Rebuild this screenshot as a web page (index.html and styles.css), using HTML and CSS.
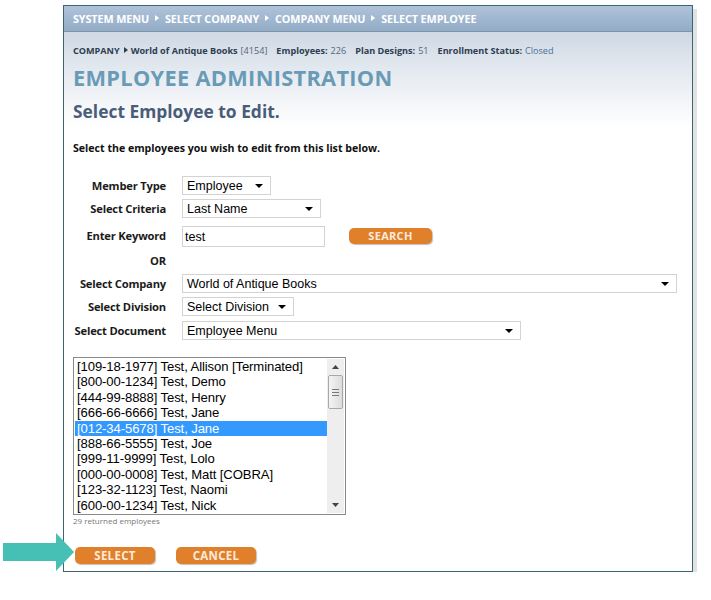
FILE: index.html
```html
<!DOCTYPE html>
<html>
<head>
<meta charset="utf-8">
<link rel="stylesheet" href="styles.css">
</head>
<body>
<div class="frame">
  <div class="topbar">
    <span>SYSTEM MENU</span><span class="tri"></span>
    <span>SELECT COMPANY</span><span class="tri"></span>
    <span>COMPANY MENU</span><span class="tri"></span>
    <span>SELECT EMPLOYEE</span>
  </div>
  <div class="head">
    <div class="info">
      <b>COMPANY</b><span class="tri dark"></span><b>World of Antique Books</b> <span class="muted">[4154]</span>
      <b class="gap">Employees:</b> <span class="muted">226</span>
      <b class="gap">Plan Designs:</b> <span class="muted">51</span>
      <b class="gap">Enrollment Status:</b> <span class="blue">Closed</span>
    </div>
    <h1>EMPLOYEE ADMINISTRATION</h1>
    <h2>Select Employee to Edit.</h2>
  </div>
  <div class="content">
    <p class="intro">Select the employees you wish to edit from this list below.</p>
    <div class="form">
      <div class="row r1"><label>Member Type</label><div class="sel w88"><span>Employee</span><svg width="8" height="4" viewBox="0 0 8 4"><path d="M0 0H8L4 4Z" fill="#000"/></svg></div></div>
      <div class="row r2"><label>Select Criteria</label><div class="sel w138"><span>Last Name</span><svg width="8" height="4" viewBox="0 0 8 4"><path d="M0 0H8L4 4Z" fill="#000"/></svg></div></div>
      <div class="row r3"><label>Enter Keyword</label><div class="inp">test</div><div class="btn search">SEARCH</div></div>
      <div class="row r4"><label>OR</label></div>
      <div class="row r5"><label>Select Company</label><div class="sel w494"><span>World of Antique Books</span><svg width="8" height="4" viewBox="0 0 8 4"><path d="M0 0H8L4 4Z" fill="#000"/></svg></div></div>
      <div class="row r6"><label>Select Division</label><div class="sel w111"><span>Select Division</span><svg width="8" height="4" viewBox="0 0 8 4"><path d="M0 0H8L4 4Z" fill="#000"/></svg></div></div>
      <div class="row r7"><label>Select Document</label><div class="sel w338"><span>Employee Menu</span><svg width="8" height="4" viewBox="0 0 8 4"><path d="M0 0H8L4 4Z" fill="#000"/></svg></div></div>
    </div>
    <div class="listbox">
      <div class="items">
        <div class="item">[109-18-1977] Test, Allison [Terminated]</div>
        <div class="item">[800-00-1234] Test, Demo</div>
        <div class="item">[444-99-8888] Test, Henry</div>
        <div class="item">[666-66-6666] Test, Jane</div>
        <div class="item on">[012-34-5678] Test, Jane</div>
        <div class="item">[888-66-5555] Test, Joe</div>
        <div class="item">[999-11-9999] Test, Lolo</div>
        <div class="item">[000-00-0008] Test, Matt [COBRA]</div>
        <div class="item">[123-32-1123] Test, Naomi</div>
        <div class="item">[600-00-1234] Test, Nick</div>
      </div>
      <div class="scroll">
        <svg class="arr" width="7" height="4" viewBox="0 0 7 4"><path d="M0 4H7L3.5 0Z" fill="#444"/></svg>
        <div class="thumb"><i></i><i></i><i></i></div>
        <div class="track"></div>
        <svg class="arr" width="7" height="4" viewBox="0 0 7 4"><path d="M0 0H7L3.5 4Z" fill="#444"/></svg>
      </div>
    </div>
    <div class="count">29 returned employees</div>
    <div class="actions">
      <div class="btn act">SELECT</div>
      <div class="btn act">CANCEL</div>
    </div>
  </div>
  <svg class="pointer" width="72" height="38" viewBox="0 0 72 38"><path d="M0 10H53V0L71 19L53 38V28H0Z" fill="#46bfb4"/></svg>
</div>
</body>
</html>
```

FILE: styles.css
```css
* { box-sizing: border-box; }
html, body { margin: 0; padding: 0; background: #fff; }
body { font-family: "Open Sans", "DejaVu Sans", sans-serif; color: #111; }

.frame {
  position: relative;
  margin: 5px 0 0 63px;
  width: 630px;
  height: 567px;
  border: 1.5px solid #3b6571;
  box-shadow: 4px 4px 0 #e2e2e2;
  background: #fff;
}

.topbar {
  height: 26px;
  background: linear-gradient(#afc3da, #93acc6);
  border-bottom: 1px solid #7f95ac;
  display: flex;
  align-items: center;
  padding-left: 9px;
  color: #fff;
  font-weight: 700;
  font-size: 10.8px;
  letter-spacing: -0.1px;
}
.tri {
  display: inline-block;
  width: 0; height: 0;
  border-left: 4px solid #fff;
  border-top: 3.5px solid transparent;
  border-bottom: 3.5px solid transparent;
  margin: 0 6px 2px 6px;
}
.tri.dark { border-left-color: #2e3d50; margin: 0 3px 1px 4px; }

.head {
  background: linear-gradient(#cfd9e4, #e6ebf1 45%, #ffffff 100%);
  padding: 10px 9px 0 9px;
  height: 95px;
}
.info {
  font-size: 9.1px;
  color: #2e3d50;
  white-space: nowrap;
  height: 16px;
  display: flex;
  align-items: center;
}
.info b { font-weight: 700; }
.info .gap { margin-left: 9px; }
.info .muted { color: #56657a; margin-left: 3px; }
.info .blue { color: #4a6d9b; margin-left: 3px; }

h1 {
  margin: 8px 0 0 0;
  font-size: 21.8px;
  line-height: 24px;
  font-weight: 700;
  color: #6a9bb6;
  letter-spacing: 0.3px;
}
h2 {
  margin: 10px 0 0 0;
  font-size: 17.4px;
  line-height: 22px;
  font-weight: 700;
  color: #4a5d78;
}

.content { padding: 0 9px; }
.intro {
  margin: 14px 0 0 0;
  font-size: 10.6px;
  line-height: 14px;
  font-weight: 700;
  color: #111;
}

.form { margin-top: 21px; }
.row {
  display: flex;
  align-items: center;
}
.row label {
  width: 93px;
  text-align: right;
  font-size: 11.2px;
  font-weight: 700;
  color: #1b1b1b;
  margin-right: 16px;
  letter-spacing: -0.2px;
}
.r1 { height: 19px; }
.r2 { margin-top: 4px; height: 19px; }
.r3 { margin-top: 8px; height: 21px; }
.r4 { margin-top: 5px; height: 16px; }
.r5 { margin-top: 6px; height: 19px; }
.r6 { margin-top: 4px; height: 19px; }
.r7 { margin-top: 5px; height: 19px; }
.r3 label { margin-top: -3px; }

.sel {
  height: 19px;
  border: 1px solid #d3d3d3;
  background: #fff;
  display: flex;
  align-items: center;
  justify-content: space-between;
  padding: 0 7px 0 4px;
  font-family: "Liberation Sans", Arial, sans-serif;
  font-size: 12.5px;
  color: #000;
}
.sel svg { flex: none; }
.w88 { width: 89px; }
.w138 { width: 139px; }
.w494 { width: 495px; }
.w111 { width: 112px; }
.w338 { width: 339px; }

.inp {
  width: 143px;
  height: 21px;
  border: 1px solid #d3d3d3;
  padding: 2px 0 0 2px;
  font-family: "Liberation Sans", Arial, sans-serif;
  font-size: 12.5px;
  line-height: 16px;
  color: #000;
}

.btn {
  display: flex;
  align-items: center;
  justify-content: center;
  background: #e0802b;
  color: #fdeadb;
  font-weight: 700;
  font-size: 11px;
  border-radius: 5px;
  box-shadow: 1px 1px 1px rgba(0,0,0,0.25);
  letter-spacing: 0.3px;
}
.search { width: 83px; height: 16px; margin-left: 24px; margin-top: -2px; }

.listbox {
  margin-top: 17px;
  width: 273px;
  height: 158px;
  border: 1px solid #8a8a8a;
  display: flex;
  padding: 1px;
}
.items { flex: 1; overflow: hidden; }
.item {
  height: 15.4px;
  line-height: 15.4px;
  font-family: "Liberation Sans", Arial, sans-serif;
  font-size: 13.1px;
  color: #000;
  padding-left: 2px;
  white-space: nowrap;
  letter-spacing: -0.1px;
}
.item.on { background: #3399ff; color: #fff; }

.scroll {
  width: 17px;
  background: #eeeeee;
  display: flex;
  flex-direction: column;
  align-items: center;
}
.scroll .arr { margin: 6px 0 6px 0; flex: none; }
.thumb {
  width: 15px;
  height: 34px;
  border: 1px solid #a8a8a8;
  border-radius: 2px;
  background: linear-gradient(90deg, #f4f4f4, #dcdcdc);
  display: flex;
  flex-direction: column;
  align-items: center;
  justify-content: center;
  gap: 2px;
}
.thumb i { display: block; width: 7px; height: 1px; background: #777; }
.track { flex: 1; }

.count {
  margin-top: 0;
  font-size: 8px;
  color: #777;
}
.actions {
  margin-top: 21px;
  display: flex;
  gap: 21px;
  padding-left: 2px;
}
.act { width: 80px; height: 17px; font-size: 11.5px; }

.pointer {
  position: absolute;
  left: -61px;
  top: 527px;
}
```
